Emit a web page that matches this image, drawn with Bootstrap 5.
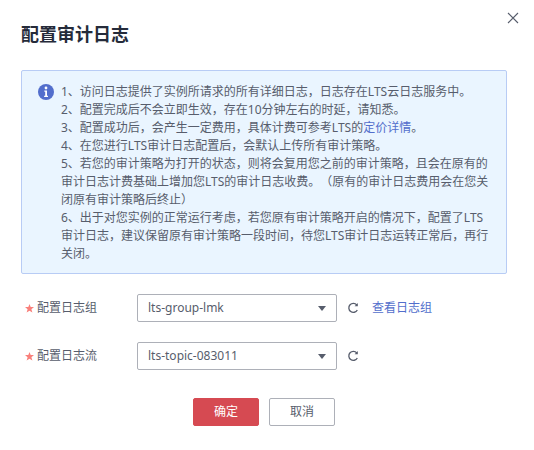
<!DOCTYPE html>
<html lang="zh"><head><meta charset="utf-8">
<link rel="stylesheet" href="https://cdn.jsdelivr.net/npm/bootstrap@5.3.0/dist/css/bootstrap.min.css">
<style>
html,body{height:100%;background:#fff;}
body{font-family:"Noto Sans","Noto Sans CJK SC",sans-serif;font-size:12px;color:#575d6c;overflow:hidden;text-spacing-trim:space-all;}
.dlg{position:relative;padding:25px 27px 0 21px;width:534px;}
.dlg-close{position:absolute;top:11px;right:14px;width:14px;height:14px;padding:0;border:0;background:none;display:block;}
.dlg-title{font-size:18px;line-height:18px;font-weight:700;color:#252b3a;margin:0 0 27px;}
.notice{background:#eaf5ff;border:1px solid #b8ccf5;border-radius:2px;padding:12px 16px 12px 16px;height:204px;margin-bottom:20px;gap:7px;}
.notice-ic{flex:none;width:16px;height:16px;margin-top:1px;}
.notice-tx{line-height:18px;color:#575d6c;}
.notice-tx a,.lnk{color:#526ecc;text-decoration:none;}
.frow{height:28px;margin-bottom:20px;}
.flabel{width:116px;flex:none;padding-left:4px;gap:3px;}
.star{width:9px;height:9px;flex:none;}
.fsel{width:200px;flex:none;height:28px;border:1px solid #adb0b8;border-radius:2px;padding:0 10px;font-size:12px;color:#575d6c;line-height:26px;}
.caret{width:0;height:0;border-left:4px solid transparent;border-right:4px solid transparent;border-top:5px solid #575d6c;}
.rf{width:12px;height:12px;margin-left:10px;flex:none;}
.lnk{margin-left:13px;}
.actions{margin-top:28px;padding-left:172px;gap:10px;}
.bt{width:66px;height:28px;padding:0;font-size:12px;border-radius:2px;line-height:26px;}
.bt-ok{background:#d64a52;border:1px solid #d64a52;color:#fff;}
.bt-no{background:#fff;border:1px solid #adb0b8;color:#575d6c;}
</style></head><body>
<div class="dlg">
<button class="dlg-close" type="button" aria-label="关闭"><svg width="14" height="14" viewBox="0 0 14 14" class="d-block"><path d="M2 2l10 10M12 2L2 12" stroke="#575d6c" stroke-width="1.1" fill="none"/></svg></button>
<h5 class="dlg-title">配置审计日志</h5>
<div class="notice d-flex">
<svg class="notice-ic" viewBox="0 0 16 16"><circle cx="8" cy="8" r="8" fill="#526ecc"/><circle cx="8" cy="4" r="1.4" fill="#fff"/><path d="M6.3 6.6H9v5.2h1v1.2H6.1v-1.2h1.1V7.8H6.3z" fill="#fff"/></svg>
<div class="notice-tx">1、访问日志提供了实例所请求的所有详细日志，日志存在LTS云日志服务中。<br>2、配置完成后不会立即生效，存在10分钟左右的时延，请知悉。<br>3、配置成功后，会产生一定费用，具体计费可参考LTS的<a href="#">定价详情</a>。<br>4、在您进行LTS审计日志配置后，会默认上传所有审计策略。<br>5、若您的审计策略为打开的状态，则将会复用您之前的审计策略，且会在原有的审计日志计费基础上增加您LTS的审计日志收费。（原有的审计日志费用会在您关闭原有审计策略后终止）<br>6、出于对您实例的正常运行考虑，若您原有审计策略开启的情况下，配置了LTS审计日志，建议保留原有审计策略一段时间，待您LTS审计日志运转正常后，再行关闭。</div>
</div>
<div class="frow d-flex align-items-center">
<div class="flabel d-flex align-items-center"><svg class="star" viewBox="0 0 9 9"><path d="M4.500 0l1.200 3.100H9L6.400 5.200l1 3.400-2.900-1.900-2.900 1.900 1-3.400L0 3.100h3.300z" fill="#f9807b"/></svg><span>配置日志组</span></div>
<div class="fsel d-flex align-items-center justify-content-between"><span>lts-group-lmk</span><span class="caret"></span></div>
<svg class="rf" viewBox="0 0 12 12"><path d="M9.800 3A4.500 4.500 0 1 0 10.300 8" stroke="#575d6c" stroke-width="1.300" fill="none"/><path d="M10.800 1v3.200H7.600z" fill="#575d6c"/></svg>
<a class="lnk" href="#">查看日志组</a>
</div>
<div class="frow d-flex align-items-center">
<div class="flabel d-flex align-items-center"><svg class="star" viewBox="0 0 9 9"><path d="M4.500 0l1.200 3.100H9L6.400 5.200l1 3.400-2.900-1.900-2.900 1.900 1-3.400L0 3.100h3.300z" fill="#f9807b"/></svg><span>配置日志流</span></div>
<div class="fsel d-flex align-items-center justify-content-between"><span>lts-topic-083011</span><span class="caret"></span></div>
<svg class="rf" viewBox="0 0 12 12"><path d="M9.800 3A4.500 4.500 0 1 0 10.300 8" stroke="#575d6c" stroke-width="1.300" fill="none"/><path d="M10.800 1v3.200H7.600z" fill="#575d6c"/></svg>
</div>
<div class="actions d-flex">
<button class="btn bt bt-ok" type="button">确定</button>
<button class="btn bt bt-no" type="button">取消</button>
</div>
</div>
<script src="https://cdn.jsdelivr.net/npm/bootstrap@5.3.0/dist/js/bootstrap.bundle.min.js"></script>
</body></html>
